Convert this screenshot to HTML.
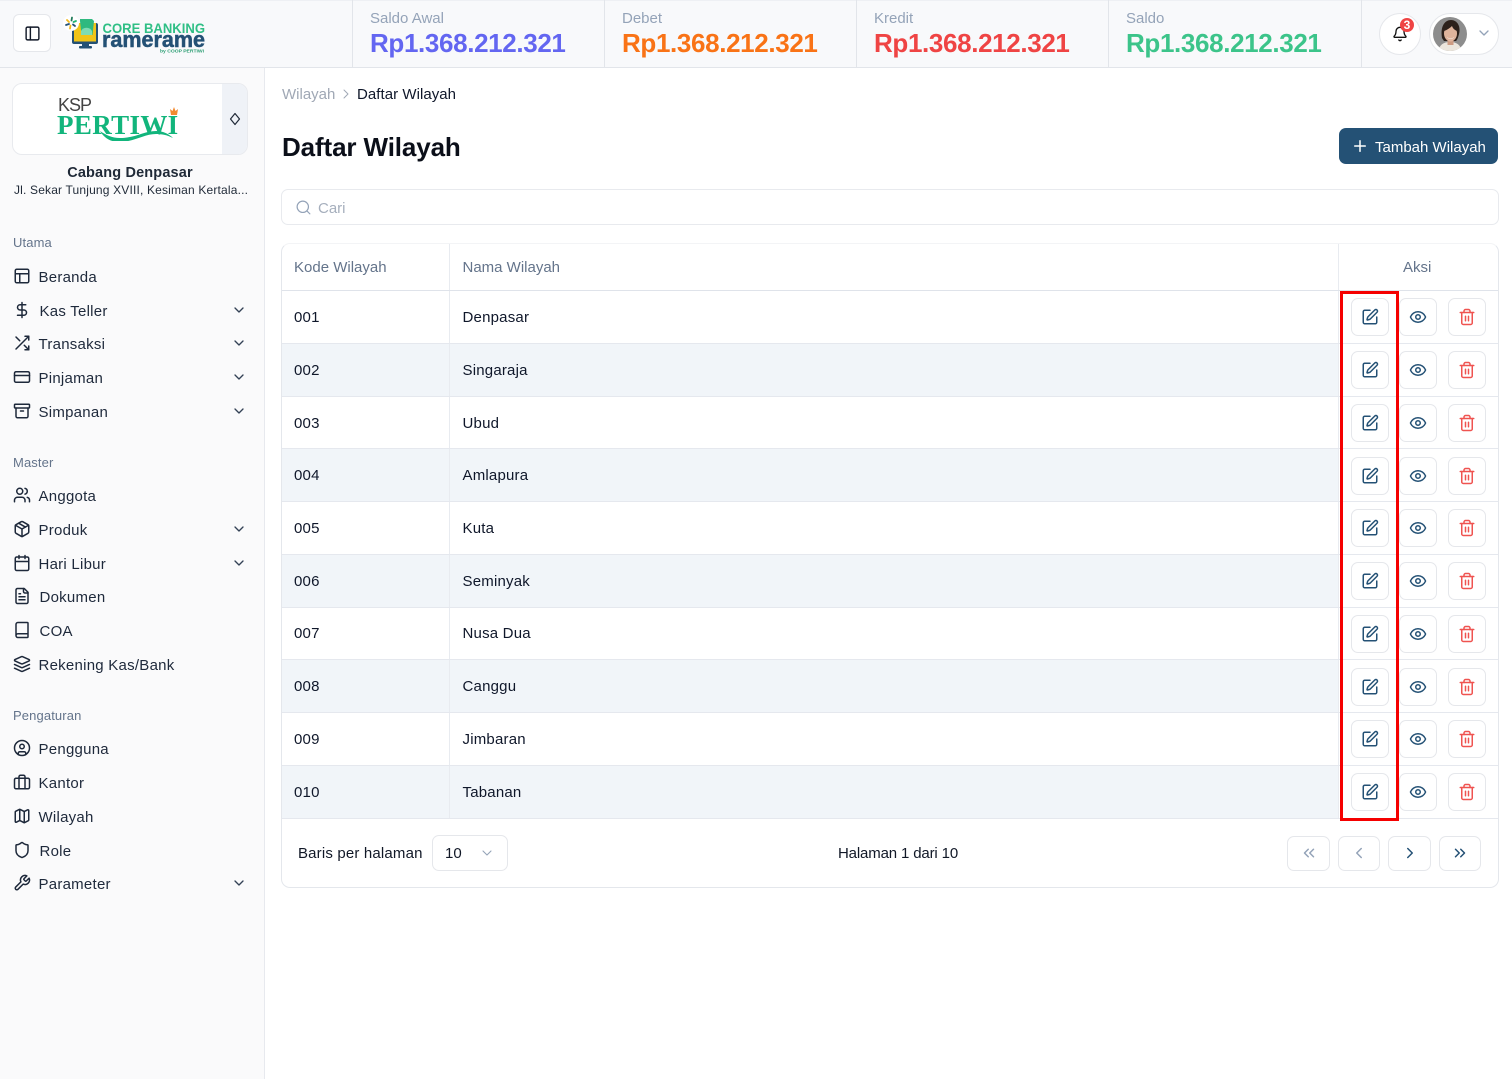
<!DOCTYPE html>
<html><head><meta charset="utf-8"><title>Daftar Wilayah</title>
<style>
*{box-sizing:border-box}
html,body{margin:0;padding:0}
body{width:1512px;height:1079px;position:relative;overflow:hidden;background:#fff;font-family:"Liberation Sans",sans-serif;color:#0f172a}
.a{position:absolute}
.t{position:absolute;white-space:nowrap;line-height:20px;height:20px}
.n{font-size:15px;letter-spacing:.25px;color:#1e293b;margin-top:3px}
.s{font-size:13px;letter-spacing:.12px;color:#64748b;margin-top:1px}
.l{font-size:15px;letter-spacing:0;color:#94a3b8;margin-top:1px}
.v{font-size:26px;font-weight:bold;letter-spacing:-.36px;line-height:30px;height:30px}
.c{font-size:15px;letter-spacing:.2px;color:#0f172a;margin-top:2px}
.h{font-size:15px;letter-spacing:0;color:#64748b;margin-top:2px}
svg.i{position:absolute;fill:none;stroke:currentColor;stroke-width:2;stroke-linecap:round;stroke-linejoin:round;overflow:visible}
.m{width:18px;height:18px;left:12.5px;color:#1e293b;stroke-width:1.9}
.d{width:16px;height:16px;color:#334155;stroke-width:1.5}
.b{position:absolute;width:38px;height:38px;border:1px solid #e5e7eb;border-radius:7px;background:#fff}
.r{position:absolute;left:282px;width:1057px;background:#f1f5f9}
.ln{position:absolute;left:282px;width:1216px;height:1px;background:#e5e8ee}
.p{position:absolute;top:836px;height:35px;border:1px solid #e5e7eb;border-radius:7px;background:#fff}
</style></head>
<body>
<svg width="0" height="0" style="position:absolute">
<defs>
<symbol id="chev" viewBox="0 0 24 24"><path d="m6 9 6 6 6-6"/></symbol>
<symbol id="pen" viewBox="0 0 24 24"><path d="M12 3H5a2 2 0 0 0-2 2v14a2 2 0 0 0 2 2h14a2 2 0 0 0 2-2v-7"/><path d="M18.375 2.625a1 1 0 0 1 3 3l-9.013 9.014a2 2 0 0 1-.853.505l-2.873.84a.5.5 0 0 1-.62-.62l.84-2.873a2 2 0 0 1 .506-.852z"/></symbol>
<symbol id="eye" viewBox="0 0 24 24"><path d="M2.062 12.348a1 1 0 0 1 0-.696 10.75 10.75 0 0 1 19.876 0 1 1 0 0 1 0 .696 10.75 10.75 0 0 1-19.876 0"/><circle cx="12" cy="12" r="3"/></symbol>
<symbol id="trash" viewBox="0 0 24 24"><path d="M3 6h18"/><path d="M19 6v14c0 1-1 2-2 2H7c-1 0-2-1-2-2V6"/><path d="M8 6V4c0-1 1-2 2-2h4c1 0 2 1 2 2v2"/><path d="M10 11v6"/><path d="M14 11v6"/></symbol>
</defs>
</svg>

<!-- header -->
<div class="a" style="left:0;top:0;width:1512px;height:68px;background:#f8f9fb;border-top:1px solid #eef0f4;border-bottom:1px solid #e2e5ea"></div>
<div class="a" style="left:0;top:68px;width:265px;height:1011px;background:#fafafb;border-right:1px solid #e7e9ee"></div>
<div class="a" style="left:352px;top:0;width:1px;height:68px;background:#e2e5ea"></div>
<div class="a" style="left:604px;top:0;width:1px;height:68px;background:#e2e5ea"></div>
<div class="a" style="left:856px;top:0;width:1px;height:68px;background:#e2e5ea"></div>
<div class="a" style="left:1108px;top:0;width:1px;height:68px;background:#e2e5ea"></div>
<div class="a" style="left:1361px;top:0;width:1px;height:68px;background:#e2e5ea"></div>

<div class="a" style="left:13px;top:14px;width:38px;height:38px;background:#fff;border:1px solid #e5e7eb;border-radius:6px"></div>
<svg class="i" style="left:23.5px;top:24.5px;width:17px;height:17px;color:#111827" viewBox="0 0 24 24"><rect x="3" y="3" width="18" height="18" rx="2"/><path d="M9 3v18"/></svg>

<!-- logo -->
<svg class="a" style="left:62px;top:14px;overflow:visible" width="150" height="42" viewBox="0 0 150 42">
<rect x="10" y="9" width="26" height="21" rx="2" fill="#245175"/>
<rect x="12" y="9" width="22" height="18.500" fill="#f0c419"/>
<path d="M18 5h12l2 2-1.500 14h-11L18 7z" fill="#2fb97f"/>
<path d="M19 21v-4a6 5.500 0 0 1 11 0v4z" fill="#7fdcb3"/>
<rect x="20" y="30" width="7" height="3" fill="#245175"/><rect x="17" y="32" width="13" height="2.500" rx="1" fill="#245175"/>
<circle cx="9" cy="9" r="8" fill="#fff"/>
<g fill="none" stroke-width="1.800" stroke-linecap="round"><path d="M5 6l2 2" stroke="#f2b91c"/><path d="M10 3.500l-.5 3" stroke="#1f7a5a"/><path d="M4 11l3-1" stroke="#245175"/><path d="M14 7l-2.500 1" stroke="#22b573"/><path d="M13 12l-2-1.500" stroke="#245175"/><path d="M8 14.500l.5-3" stroke="#f2b91c"/></g>
<text x="40.500" y="19" font-family="Liberation Sans" font-weight="bold" font-size="14" fill="#2fbf85" textLength="102.500" lengthAdjust="spacingAndGlyphs">CORE BANKING</text>
<text x="40" y="33" font-family="Liberation Sans" font-weight="bold" font-size="22" fill="#245175" stroke="#245175" stroke-width=".5" textLength="103" lengthAdjust="spacingAndGlyphs">ramerame</text>
<text x="98" y="38.500" font-family="Liberation Sans" font-weight="bold" font-size="4.500" fill="#2a9d72" textLength="44" lengthAdjust="spacingAndGlyphs">by COOP PERTIWI</text>
</svg>

<!-- stats -->
<div class="t l" style="left:370px;top:8px">Saldo Awal</div>
<div class="t v" style="left:370px;top:28px;color:#6366f1">Rp1.368.212.321</div>
<div class="t l" style="left:622px;top:8px">Debet</div>
<div class="t v" style="left:622px;top:28px;color:#f97316">Rp1.368.212.321</div>
<div class="t l" style="left:874px;top:8px">Kredit</div>
<div class="t v" style="left:874px;top:28px;color:#ef4444">Rp1.368.212.321</div>
<div class="t l" style="left:1126px;top:8px">Saldo</div>
<div class="t v" style="left:1126px;top:28px;color:#3cc48a">Rp1.368.212.321</div>

<!-- bell + avatar -->
<div class="a" style="left:1379px;top:13px;width:42px;height:42px;border-radius:50%;background:#fff;border:1px solid #e5e7eb"></div>
<svg class="i" style="left:1392px;top:26px;width:16px;height:16px;color:#111" viewBox="0 0 24 24"><path d="M10.268 21a2 2 0 0 0 3.464 0"/><path d="M3.262 15.326A1 1 0 0 0 4 17h16a1 1 0 0 0 .74-1.673C19.41 13.956 18 12.499 18 8A6 6 0 0 0 6 8c0 4.499-1.411 5.956-2.738 7.326"/></svg>
<div class="a" style="left:1400px;top:18px;width:14px;height:14px;border-radius:50%;background:#ef4444;color:#fff;font-size:12px;font-weight:bold;line-height:14px;text-align:center">3</div>
<div class="a" style="left:1429px;top:13px;width:70px;height:42px;border-radius:21px;background:#fff;border:1px solid #e5e7eb"></div>
<svg class="a" style="left:1433px;top:17px" width="34" height="34" viewBox="0 0 34 34">
<defs><clipPath id="av"><circle cx="17" cy="17" r="17"/></clipPath></defs>
<g clip-path="url(#av)"><rect width="34" height="34" fill="#8d8d8d"/>
<path d="M6 34c0-7 6-9 11-9s11 2 11 9z" fill="#ece6dd"/>
<path d="M9 21C7 9 12 3 18 3s10 6 8 14c-1 4-2 6-3 7H11z" fill="#2c211b"/>
<rect x="14.500" y="20" width="6" height="8" fill="#cd9b82"/>
<ellipse cx="17.500" cy="16.500" rx="6.500" ry="8" fill="#dfb49c"/>
<path d="M11 14c3-1 6-3 8-5 1 3 3 4 5 5 0-6-3-9-6.500-9S10 8 11 14z" fill="#2c211b"/>
<path d="M14 20c2 2 5 2 7 0-1 2.500-6 2.500-7 0z" fill="#fff"/></g></svg>
<svg class="i" style="left:1476px;top:25px;width:16px;height:16px;color:#94a3b8"><use href="#chev"/></svg>

<!-- branch card -->
<div class="a" style="left:12px;top:83px;width:236px;height:72px;background:#fff;border:1px solid #e8eaee;border-radius:10px;overflow:hidden"><div class="a" style="left:209px;top:0;width:26px;height:72px;background:#eff2f7"></div></div>
<svg class="i" style="left:228.5px;top:113px;width:12px;height:12px;color:#1f2937;stroke-width:1.2" viewBox="0 0 12 12"><path d="M6 .500 10.500 6 6 11.500 1.500 6z"/></svg>
<div class="t" style="left:58px;top:95px;font-size:18px;letter-spacing:-1px;color:#444">KSP</div>
<div class="a" style="left:57px;top:109px;font-family:'Liberation Serif',serif;font-weight:bold;font-size:27px;line-height:32px;color:#12b57c;letter-spacing:.35px;white-space:nowrap">PERTIWI</div>
<svg class="a" style="left:56px;top:105px" width="126" height="36" viewBox="0 0 126 36"><path d="M44 26c6 4 12 7 20 7 16 0 24-7 36-7 7 0 13 3 17 7-6-3-11-4-17-4-12 0-22 8-37 8-8 0-15-4-19-11z" fill="#12b57c"/><path d="M115 10l-1-6 2.500 2L118 2l1.500 4 2.500-2-1 6z" fill="#f28a30"/></svg>
<div class="t" style="left:0;width:260px;top:163px;text-align:center;font-size:14.5px;font-weight:bold;color:#1f2937;letter-spacing:.15px">Cabang Denpasar</div>
<div class="t" style="left:14px;top:180px;font-size:12px;letter-spacing:.17px;color:#1f2937;width:234px;overflow:hidden">Jl. Sekar Tunjung XVIII, Kesiman Kertala...</div>

<!-- sidebar -->
<div class="t s" style="left:13px;top:232px">Utama</div>
<svg class="i m" style="top:267px" viewBox="0 0 24 24"><rect x="3" y="3" width="18" height="18" rx="2"/><path d="M3 9h18"/><path d="M9 21V9"/></svg><div class="t n" style="left:38.500px;top:265px">Beranda</div>
<svg class="i m" style="top:301px;left:13px" viewBox="0 0 24 24"><path d="M12 2v20"/><path d="M17 5H9.500a3.500 3.500 0 0 0 0 7h5a3.500 3.500 0 0 1 0 7H6"/></svg><div class="t n" style="left:39.500px;top:299px">Kas Teller</div>
<svg class="i m" style="top:334px" viewBox="0 0 24 24"><path d="M16 3h5v5"/><path d="M4 20 21 3"/><path d="M21 16v5h-5"/><path d="m15 15 6 6"/><path d="m4 4 5 5"/></svg><div class="t n" style="left:38.500px;top:332px">Transaksi</div>
<svg class="i m" style="top:368px" viewBox="0 0 24 24"><rect x="2" y="5" width="20" height="14" rx="2"/><path d="M2 10h20"/></svg><div class="t n" style="left:38.500px;top:366px">Pinjaman</div>
<svg class="i m" style="top:402px" viewBox="0 0 24 24"><rect x="2" y="3" width="20" height="5" rx="1"/><path d="M4 8v11a2 2 0 0 0 2 2h12a2 2 0 0 0 2-2V8"/><path d="M10 12h4"/></svg><div class="t n" style="left:38.500px;top:400px">Simpanan</div>

<div class="t s" style="left:13px;top:452px">Master</div>
<svg class="i m" style="top:486px" viewBox="0 0 24 24"><path d="M16 21v-2a4 4 0 0 0-4-4H6a4 4 0 0 0-4 4v2"/><circle cx="9" cy="7" r="4"/><path d="M22 21v-2a4 4 0 0 0-3-3.870"/><path d="M16 3.130a4 4 0 0 1 0 7.750"/></svg><div class="t n" style="left:38.500px;top:484px">Anggota</div>
<svg class="i m" style="top:520px" viewBox="0 0 24 24"><path d="M11 21.730a2 2 0 0 0 2 0l7-4A2 2 0 0 0 21 16V8a2 2 0 0 0-1-1.730l-7-4a2 2 0 0 0-2 0l-7 4A2 2 0 0 0 3 8v8a2 2 0 0 0 1 1.730z"/><path d="M12 22V12"/><path d="M3.300 7 12 12l8.700-5"/><path d="m7.500 4.270 9 5.150"/></svg><div class="t n" style="left:38.500px;top:518px">Produk</div>
<svg class="i m" style="top:554px" viewBox="0 0 24 24"><path d="M8 2v4"/><path d="M16 2v4"/><rect x="3" y="4" width="18" height="18" rx="2"/><path d="M3 10h18"/></svg><div class="t n" style="left:38.500px;top:552px">Hari Libur</div>
<svg class="i m" style="top:587px;left:13px" viewBox="0 0 24 24"><path d="M15 2H6a2 2 0 0 0-2 2v16a2 2 0 0 0 2 2h12a2 2 0 0 0 2-2V7Z"/><path d="M14 2v4a2 2 0 0 0 2 2h4"/><path d="M10 9H8"/><path d="M16 13H8"/><path d="M16 17H8"/></svg><div class="t n" style="left:39.500px;top:585px">Dokumen</div>
<svg class="i m" style="top:621px;left:13px" viewBox="0 0 24 24"><path d="M4 19.500v-15A2.500 2.500 0 0 1 6.500 2H19a1 1 0 0 1 1 1v18a1 1 0 0 1-1 1H6.500a1 1 0 0 1 0-5H20"/></svg><div class="t n" style="left:39.500px;top:619px">COA</div>
<svg class="i m" style="top:655px" viewBox="0 0 24 24"><path d="M12.830 2.180a2 2 0 0 0-1.660 0L2.600 6.080a1 1 0 0 0 0 1.830l8.580 3.910a2 2 0 0 0 1.660 0l8.580-3.900a1 1 0 0 0 0-1.830Z"/><path d="m22 17.650-9.170 4.160a2 2 0 0 1-1.660 0L2 17.650"/><path d="m22 12.650-9.170 4.160a2 2 0 0 1-1.660 0L2 12.650"/></svg><div class="t n" style="left:38.500px;top:653px">Rekening Kas/Bank</div>

<div class="t s" style="left:13px;top:705px">Pengaturan</div>
<svg class="i m" style="top:739px" viewBox="0 0 24 24"><circle cx="12" cy="12" r="10"/><circle cx="12" cy="10" r="3"/><path d="M7 20.660V19a2 2 0 0 1 2-2h6a2 2 0 0 1 2 2v1.660"/></svg><div class="t n" style="left:38.500px;top:737px">Pengguna</div>
<svg class="i m" style="top:773px" viewBox="0 0 24 24"><rect x="2" y="7" width="20" height="14" rx="2"/><path d="M16 21V5a2 2 0 0 0-2-2h-4a2 2 0 0 0-2 2v16"/></svg><div class="t n" style="left:38.500px;top:771px">Kantor</div>
<svg class="i m" style="top:807px" viewBox="0 0 24 24"><path d="M14.106 5.553a2 2 0 0 0 1.788 0l3.659-1.830A1 1 0 0 1 21 4.619v12.764a1 1 0 0 1-.553.894l-4.553 2.277a2 2 0 0 1-1.788 0l-4.212-2.106a2 2 0 0 0-1.788 0l-3.659 1.830A1 1 0 0 1 3 19.381V6.618a1 1 0 0 1 .553-.894l4.553-2.277a2 2 0 0 1 1.788 0z"/><path d="M15 5.764v15"/><path d="M9 3.236v15"/></svg><div class="t n" style="left:38.500px;top:805px">Wilayah</div>
<svg class="i m" style="top:841px;left:13px" viewBox="0 0 24 24"><path d="M20 13c0 5-3.500 7.500-7.660 8.950a1 1 0 0 1-.670-.010C7.500 20.500 4 18 4 13V6a1 1 0 0 1 1-1c2 0 4.500-1.200 6.240-2.720a1.170 1.170 0 0 1 1.520 0C14.510 3.810 17 5 19 5a1 1 0 0 1 1 1z"/></svg><div class="t n" style="left:39.500px;top:839px">Role</div>
<svg class="i m" style="top:874px" viewBox="0 0 24 24"><path d="M14.700 6.300a1 1 0 0 0 0 1.400l1.600 1.600a1 1 0 0 0 1.400 0l3.770-3.770a6 6 0 0 1-7.940 7.940l-6.910 6.910a2.120 2.120 0 0 1-3-3l6.910-6.910a6 6 0 0 1 7.940-7.940l-3.760 3.760z"/></svg><div class="t n" style="left:38.500px;top:872px">Parameter</div>

<svg class="i d" style="left:231px;top:302px"><use href="#chev"/></svg>
<svg class="i d" style="left:231px;top:335px"><use href="#chev"/></svg>
<svg class="i d" style="left:231px;top:369px"><use href="#chev"/></svg>
<svg class="i d" style="left:231px;top:403px"><use href="#chev"/></svg>
<svg class="i d" style="left:231px;top:521px"><use href="#chev"/></svg>
<svg class="i d" style="left:231px;top:555px"><use href="#chev"/></svg>
<svg class="i d" style="left:231px;top:875px"><use href="#chev"/></svg>

<!-- main header -->
<div class="t" style="left:282px;top:85px;font-size:15px;letter-spacing:0;color:#a0a8b5">Wilayah</div>
<svg class="i" style="left:338px;top:86px;width:16px;height:16px;color:#a0a8b5;stroke-width:1.5" viewBox="0 0 24 24"><path d="m9 18 6-6-6-6"/></svg>
<div class="t" style="left:357px;top:85px;font-size:15px;letter-spacing:.05px;color:#0f172a">Daftar Wilayah</div>
<div class="t" style="left:282px;top:132px;font-size:26px;font-weight:bold;line-height:30px;height:30px;letter-spacing:-.12px;color:#0b0f19">Daftar Wilayah</div>
<div class="a" style="left:1339px;top:128px;width:159px;height:36px;background:#245175;border-radius:7px"></div>
<svg class="i" style="left:1351px;top:137px;width:18px;height:18px;color:#fff" viewBox="0 0 24 24"><path d="M5 12h14"/><path d="M12 5v14"/></svg>
<div class="t" style="left:1375px;top:138px;font-size:15px;letter-spacing:0;color:#fff">Tambah Wilayah</div>

<!-- search -->
<div class="a" style="left:281px;top:189px;width:1218px;height:36px;border:1px solid #e8eaee;border-radius:7px;background:#fff"></div>
<svg class="i" style="left:294.5px;top:198.5px;width:17px;height:17px;color:#94a3b8;stroke-width:1.7" viewBox="0 0 24 24"><circle cx="11" cy="11" r="8"/><path d="m21 21-4.300-4.300"/></svg>
<div class="t" style="left:318px;top:199px;font-size:15px;letter-spacing:0;color:#a6afbd">Cari</div>

<!-- table -->
<div class="a" style="left:281px;top:243px;width:1218px;height:645px;border:1px solid #e4e7ec;border-top-color:#f3f4f6;border-radius:9px;background:#fff"></div>
<div class="r" style="top:344px;height:52px"></div>
<div class="r" style="top:449px;height:52px"></div>
<div class="r" style="top:555px;height:52px"></div>
<div class="r" style="top:660px;height:52px"></div>
<div class="r" style="top:766px;height:52px"></div>
<div class="a" style="left:449px;top:244px;width:1px;height:574px;background:#e8ebf0"></div>
<div class="a" style="left:1338px;top:244px;width:1px;height:574px;background:#e8ebf0"></div>
<div class="ln" style="top:290px;background:#dfe3ea"></div>
<div class="ln" style="top:343px"></div><div class="ln" style="top:396px"></div><div class="ln" style="top:448px"></div><div class="ln" style="top:501px"></div><div class="ln" style="top:554px"></div><div class="ln" style="top:607px"></div><div class="ln" style="top:659px"></div><div class="ln" style="top:712px"></div><div class="ln" style="top:765px"></div><div class="ln" style="top:818px"></div>

<div class="t h" style="left:294px;top:256px">Kode Wilayah</div>
<div class="t h" style="left:462.500px;top:256px">Nama Wilayah</div>
<div class="t h" style="left:1403px;top:256px">Aksi</div>

<div class="t c" style="left:294px;top:306px">001</div><div class="t c" style="left:462.500px;top:306px">Denpasar</div>
<div class="t c" style="left:294px;top:359px">002</div><div class="t c" style="left:462.500px;top:359px">Singaraja</div>
<div class="t c" style="left:294px;top:412px">003</div><div class="t c" style="left:462.500px;top:412px">Ubud</div>
<div class="t c" style="left:294px;top:464px">004</div><div class="t c" style="left:462.500px;top:464px">Amlapura</div>
<div class="t c" style="left:294px;top:517px">005</div><div class="t c" style="left:462.500px;top:517px">Kuta</div>
<div class="t c" style="left:294px;top:570px">006</div><div class="t c" style="left:462.500px;top:570px">Seminyak</div>
<div class="t c" style="left:294px;top:622px">007</div><div class="t c" style="left:462.500px;top:622px">Nusa Dua</div>
<div class="t c" style="left:294px;top:675px">008</div><div class="t c" style="left:462.500px;top:675px">Canggu</div>
<div class="t c" style="left:294px;top:728px">009</div><div class="t c" style="left:462.500px;top:728px">Jimbaran</div>
<div class="t c" style="left:294px;top:781px">010</div><div class="t c" style="left:462.500px;top:781px">Tabanan</div>

<!-- action buttons row by row -->
<div class="b" style="left:1351px;top:298px"></div><div class="b" style="left:1399px;top:298px"></div><div class="b" style="left:1448px;top:298px"></div>
<div class="b" style="left:1351px;top:351px"></div><div class="b" style="left:1399px;top:351px"></div><div class="b" style="left:1448px;top:351px"></div>
<div class="b" style="left:1351px;top:404px"></div><div class="b" style="left:1399px;top:404px"></div><div class="b" style="left:1448px;top:404px"></div>
<div class="b" style="left:1351px;top:457px"></div><div class="b" style="left:1399px;top:457px"></div><div class="b" style="left:1448px;top:457px"></div>
<div class="b" style="left:1351px;top:509px"></div><div class="b" style="left:1399px;top:509px"></div><div class="b" style="left:1448px;top:509px"></div>
<div class="b" style="left:1351px;top:562px"></div><div class="b" style="left:1399px;top:562px"></div><div class="b" style="left:1448px;top:562px"></div>
<div class="b" style="left:1351px;top:615px"></div><div class="b" style="left:1399px;top:615px"></div><div class="b" style="left:1448px;top:615px"></div>
<div class="b" style="left:1351px;top:668px"></div><div class="b" style="left:1399px;top:668px"></div><div class="b" style="left:1448px;top:668px"></div>
<div class="b" style="left:1351px;top:720px"></div><div class="b" style="left:1399px;top:720px"></div><div class="b" style="left:1448px;top:720px"></div>
<div class="b" style="left:1351px;top:773px"></div><div class="b" style="left:1399px;top:773px"></div><div class="b" style="left:1448px;top:773px"></div>

<svg class="a" style="left:0;top:0;fill:none;stroke-width:2;stroke-linecap:round;stroke-linejoin:round;overflow:visible;pointer-events:none" width="1512" height="1079">
<g stroke="#245175"><use href="#pen" x="1361" y="308" width="18" height="18"/><use href="#pen" x="1361" y="361" width="18" height="18"/><use href="#pen" x="1361" y="414" width="18" height="18"/><use href="#pen" x="1361" y="467" width="18" height="18"/><use href="#pen" x="1361" y="519" width="18" height="18"/><use href="#pen" x="1361" y="572" width="18" height="18"/><use href="#pen" x="1361" y="625" width="18" height="18"/><use href="#pen" x="1361" y="678" width="18" height="18"/><use href="#pen" x="1361" y="730" width="18" height="18"/><use href="#pen" x="1361" y="783" width="18" height="18"/>
<use href="#eye" x="1409" y="308" width="18" height="18"/><use href="#eye" x="1409" y="361" width="18" height="18"/><use href="#eye" x="1409" y="414" width="18" height="18"/><use href="#eye" x="1409" y="467" width="18" height="18"/><use href="#eye" x="1409" y="519" width="18" height="18"/><use href="#eye" x="1409" y="572" width="18" height="18"/><use href="#eye" x="1409" y="625" width="18" height="18"/><use href="#eye" x="1409" y="678" width="18" height="18"/><use href="#eye" x="1409" y="730" width="18" height="18"/><use href="#eye" x="1409" y="783" width="18" height="18"/></g>
<g stroke="#ef5350"><use href="#trash" x="1458" y="308" width="18" height="18"/><use href="#trash" x="1458" y="361" width="18" height="18"/><use href="#trash" x="1458" y="414" width="18" height="18"/><use href="#trash" x="1458" y="467" width="18" height="18"/><use href="#trash" x="1458" y="519" width="18" height="18"/><use href="#trash" x="1458" y="572" width="18" height="18"/><use href="#trash" x="1458" y="625" width="18" height="18"/><use href="#trash" x="1458" y="678" width="18" height="18"/><use href="#trash" x="1458" y="730" width="18" height="18"/><use href="#trash" x="1458" y="783" width="18" height="18"/></g>
</svg>

<!-- red annotation -->
<div class="a" style="left:1340px;top:291px;width:59px;height:530px;border:3px solid #f50000"></div>

<!-- footer -->
<div class="t" style="left:298px;top:844px;font-size:15px;letter-spacing:.17px;color:#111827">Baris per halaman</div>
<div class="a" style="left:432px;top:835px;width:76px;height:36px;border:1px solid #e5e7eb;border-radius:7px;background:#fff"></div>
<div class="t" style="left:445px;top:844px;font-size:15px;color:#111827">10</div>
<svg class="i" style="left:479px;top:845px;width:16px;height:16px;color:#94a3b8;stroke-width:1.600"><use href="#chev"/></svg>
<div class="t" style="left:838px;top:844px;font-size:15px;letter-spacing:-.15px;color:#111827">Halaman 1 dari 10</div>
<div class="p" style="left:1287px;width:43px"></div><div class="p" style="left:1338px;width:42px"></div><div class="p" style="left:1388px;width:43px"></div><div class="p" style="left:1439px;width:42px"></div>
<svg class="i" style="left:1300px;top:844px;width:18px;height:18px;color:#94a3b8" viewBox="0 0 24 24"><path d="m11 17-5-5 5-5"/><path d="m18 17-5-5 5-5"/></svg>
<svg class="i" style="left:1350px;top:844px;width:18px;height:18px;color:#94a3b8" viewBox="0 0 24 24"><path d="m15 18-6-6 6-6"/></svg>
<svg class="i" style="left:1401px;top:844px;width:18px;height:18px;color:#245175" viewBox="0 0 24 24"><path d="m9 18 6-6-6-6"/></svg>
<svg class="i" style="left:1451px;top:844px;width:18px;height:18px;color:#245175" viewBox="0 0 24 24"><path d="m6 17 5-5-5-5"/><path d="m13 17 5-5-5-5"/></svg>
</body></html>
